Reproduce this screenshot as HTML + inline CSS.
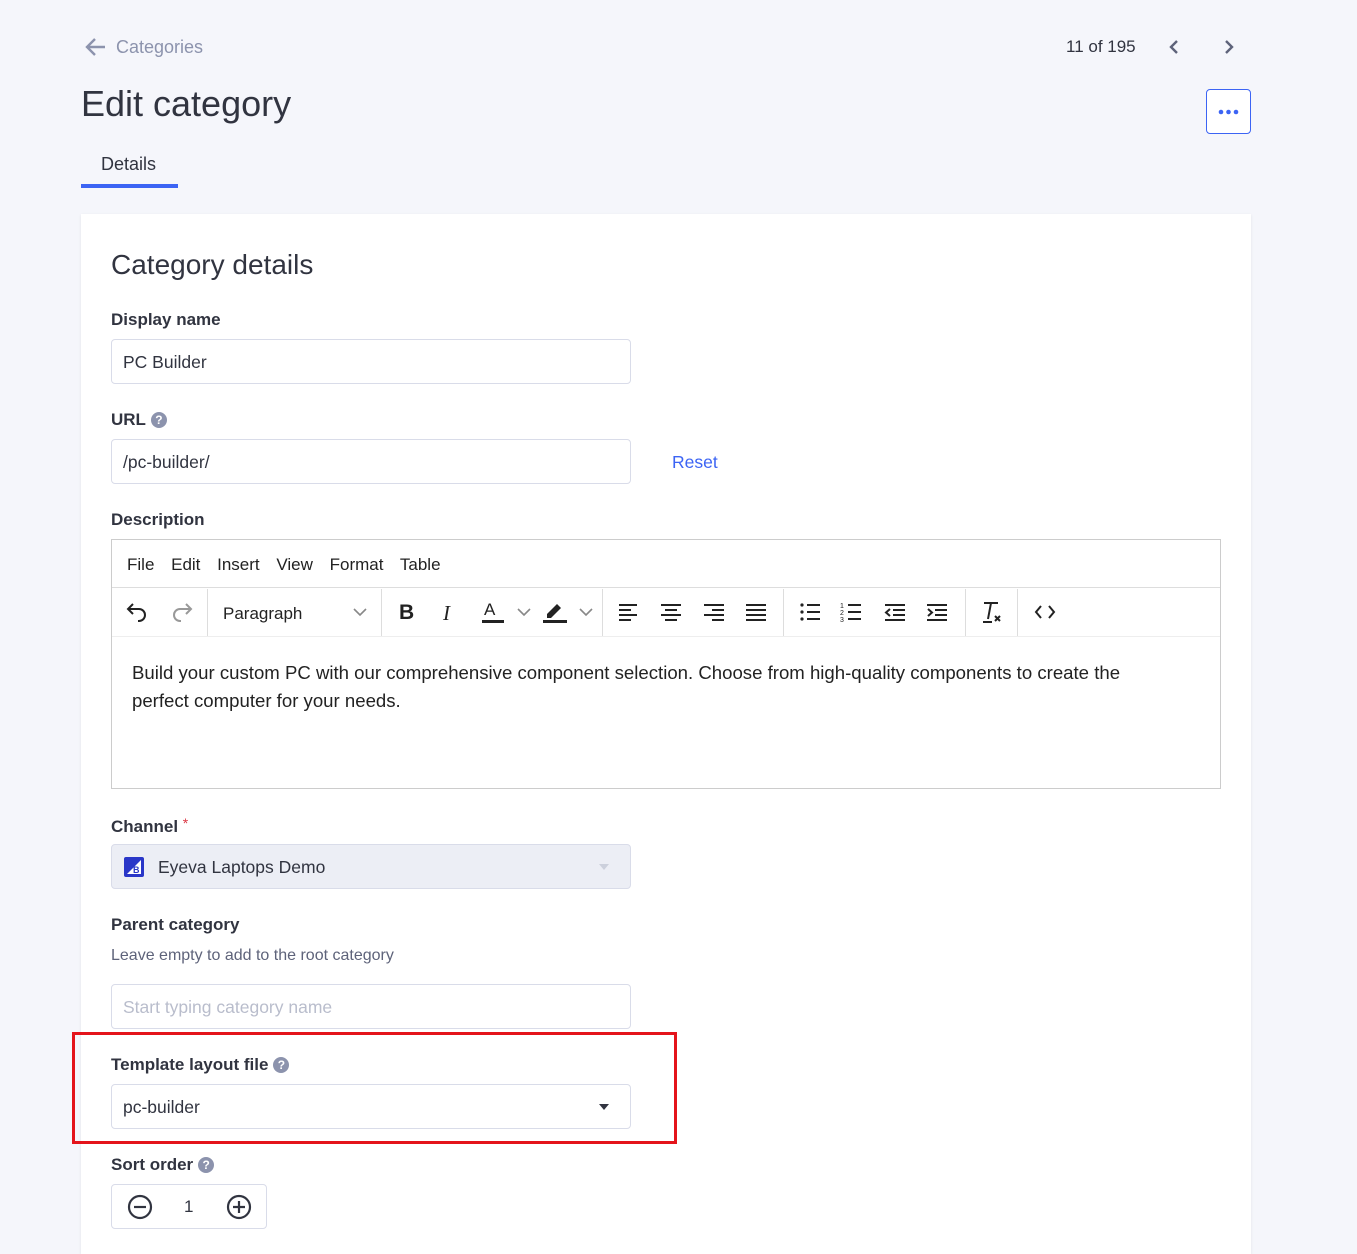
<!DOCTYPE html>
<html><head><meta charset="utf-8"><style>
*{box-sizing:border-box;margin:0;padding:0}
body{width:1357px;height:1235px;background:#f5f6fb;font-family:"Liberation Sans",sans-serif;color:#313440;position:relative;overflow:hidden}
.a{position:absolute;white-space:nowrap}
.card{position:absolute;left:81px;top:214px;width:1170px;height:1040px;background:#fff;box-shadow:0 1px 3px rgba(0,0,0,.08)}
.lbl{font-weight:bold;font-size:17px;color:#313440}
.inp{position:absolute;left:111px;width:520px;height:45px;border:1px solid #d9dce9;border-radius:4px;background:#fff;font-size:17.5px;padding:12px 11px 0;color:#313440}
.q{display:inline-block;width:16px;height:16px;border-radius:50%;background:#8c93ad;color:#fff;font-size:12px;text-align:center;line-height:16px;vertical-align:1px;margin-left:5px;font-weight:bold}
.ic{position:absolute;top:598px}
</style></head><body>
<svg class="a" style="left:85px;top:37px" width="22" height="20" viewBox="0 0 22 20"><path d="M20 10H3M10 2L2 10l8 8" fill="none" stroke="#8c93ad" stroke-width="2.4"/></svg>
<div class="a" style="left:116px;top:37px;font-size:18px;color:#8c93ad">Categories</div>
<div class="a" style="left:81px;top:83px;font-size:36px;color:#313440">Edit category</div>
<div class="a" style="left:101px;top:154px;font-size:18px;color:#313440">Details</div>
<div class="a" style="left:81px;top:184px;width:97px;height:4px;background:#3c64f4"></div>
<div class="a" style="left:1066px;top:37px;font-size:17px;color:#313440">11 of 195</div>
<svg class="a" style="left:1166px;top:38px" width="16" height="18"><path d="M11 3L5 9l6 6" fill="none" stroke="#5e637a" stroke-width="2.4"/></svg>
<svg class="a" style="left:1221px;top:38px" width="16" height="18"><path d="M5 3l6 6-6 6" fill="none" stroke="#5e637a" stroke-width="2.4"/></svg>
<div class="a" style="left:1206px;top:89px;width:45px;height:45px;border:1px solid #3c64f4;border-radius:4px;background:#fff"><svg width="43" height="43"><circle cx="14" cy="22" r="2.3" fill="#3c64f4"/><circle cx="21.5" cy="22" r="2.3" fill="#3c64f4"/><circle cx="29" cy="22" r="2.3" fill="#3c64f4"/></svg></div>

<div class="card"></div>
<div class="a" style="left:111px;top:249px;font-size:28px;color:#313440">Category details</div>
<div class="a lbl" style="left:111px;top:310px">Display name</div>
<div class="inp" style="top:339px">PC Builder</div>
<div class="a lbl" style="left:111px;top:410px">URL<span class="q">?</span></div>
<div class="inp" style="top:439px">/pc-builder/</div>
<div class="a" style="left:672px;top:452px;font-size:17.5px;color:#3c64f4">Reset</div>
<div class="a lbl" style="left:111px;top:510px">Description</div>
<div class="a" style="left:111px;top:539px;width:1110px;height:250px;border:1px solid #ccc;background:#fff"></div>
<div class="a" style="left:112px;top:587px;width:1108px;height:1px;background:#ddd"></div>
<div class="a" style="left:112px;top:636px;width:1108px;height:1px;background:#eee"></div>
<div class="a" style="left:127px;top:555px;font-size:17px;color:#222;word-spacing:12px">File Edit Insert View Format Table</div>
<div class="a" style="left:207px;top:589px;width:1px;height:47px;background:#ddd"></div>
<div class="a" style="left:381px;top:589px;width:1px;height:47px;background:#ddd"></div>
<div class="a" style="left:602px;top:589px;width:1px;height:47px;background:#ddd"></div>
<div class="a" style="left:783px;top:589px;width:1px;height:47px;background:#ddd"></div>
<div class="a" style="left:965px;top:589px;width:1px;height:47px;background:#ddd"></div>
<div class="a" style="left:1017px;top:589px;width:1px;height:47px;background:#ddd"></div>
<svg class="ic" style="left:125px" width="24" height="28"><path d="M8 6L3 11l5 5M3 11h11a6 6 0 0 1 0 12h-1" fill="none" stroke="#222" stroke-width="2"/></svg>
<svg class="ic" style="left:170px" width="24" height="28"><path d="M16 6l5 5-5 5M21 11H10a6 6 0 0 0 0 12h1" fill="none" stroke="#999" stroke-width="2"/></svg>
<div class="a" style="left:223px;top:604px;font-size:17px;color:#222">Paragraph</div>
<svg class="ic" style="left:352px" width="16" height="28"><path d="M2 11l6 6 6-6" fill="none" stroke="#888" stroke-width="1.6"/></svg>
<div class="a" style="left:399px;top:601px;font-size:21px;font-weight:bold;color:#222">B</div>
<div class="a" style="left:443px;top:601px;font-size:21px;font-style:italic;font-family:'Liberation Serif',serif;color:#222">I</div>
<div class="a" style="left:484px;top:600px;font-size:17px;color:#222">A</div>
<div class="a" style="left:482px;top:620px;width:22px;height:3px;background:#222"></div>
<svg class="ic" style="left:516px" width="16" height="28"><path d="M2 11l6 6 6-6" fill="none" stroke="#888" stroke-width="1.6"/></svg>
<svg class="ic" style="left:543px" width="24" height="28"><path d="M4 16l10-10 4 4-10 10H4z" fill="#222"/><rect x="0" y="22" width="24" height="3" fill="#222"/></svg>
<svg class="ic" style="left:578px" width="16" height="28"><path d="M2 11l6 6 6-6" fill="none" stroke="#888" stroke-width="1.6"/></svg>
<svg class="ic" style="left:618px" width="22" height="28"><path d="M1 7h18M1 12h12M1 17h18M1 22h12" stroke="#222" stroke-width="2"/></svg>
<svg class="ic" style="left:660px" width="22" height="28"><path d="M1 7h20M5 12h12M1 17h20M5 22h12" stroke="#222" stroke-width="2"/></svg>
<svg class="ic" style="left:703px" width="22" height="28"><path d="M1 7h20M9 12h12M1 17h20M9 22h12" stroke="#222" stroke-width="2"/></svg>
<svg class="ic" style="left:745px" width="22" height="28"><path d="M1 7h20M1 12h20M1 17h20M1 22h20" stroke="#222" stroke-width="2"/></svg>
<svg class="ic" style="left:799px" width="24" height="28"><circle cx="3" cy="7" r="1.6" fill="#222"/><circle cx="3" cy="14" r="1.6" fill="#222"/><circle cx="3" cy="21" r="1.6" fill="#222"/><path d="M8 7h13M8 14h13M8 21h13" stroke="#222" stroke-width="2"/></svg>
<svg class="ic" style="left:840px" width="24" height="28"><text x="0" y="10" font-size="7" fill="#222">1</text><text x="0" y="17" font-size="7" fill="#222">2</text><text x="0" y="24" font-size="7" fill="#222">3</text><path d="M8 7h13M8 14h13M8 21h13" stroke="#222" stroke-width="2"/></svg>
<svg class="ic" style="left:884px" width="24" height="28"><path d="M1 7h20M9 12h12M9 17h12M1 22h20M6 11l-4 3.5 4 3.5" fill="none" stroke="#222" stroke-width="2"/></svg>
<svg class="ic" style="left:926px" width="24" height="28"><path d="M1 7h20M9 12h12M9 17h12M1 22h20M2 11l4 3.5-4 3.5" fill="none" stroke="#222" stroke-width="2"/></svg>
<svg class="ic" style="left:980px" width="24" height="28"><path d="M4 5h14M11 5l-3 16M3 24h9M15 18l5 5M20 18l-5 5" fill="none" stroke="#222" stroke-width="2"/></svg>
<svg class="ic" style="left:1033px" width="24" height="28"><path d="M8 8l-5 6 5 6M16 8l5 6-5 6" fill="none" stroke="#222" stroke-width="2"/></svg>
<div class="a" style="left:132px;top:659px;font-size:18.6px;line-height:28px;color:#222;white-space:normal;width:1040px">Build your custom PC with our comprehensive component selection. Choose from high-quality components to create the perfect computer for your needs.</div>

<div class="a lbl" style="left:111px;top:815px">Channel <span style="color:#db3643;font-weight:normal;font-size:14px;vertical-align:4px">*</span></div>
<div class="inp" style="top:844px;background:#eceef5;padding-left:46px;color:#313440">Eyeva Laptops Demo</div>
<svg class="a" style="left:124px;top:857px" width="20" height="20"><rect width="20" height="20" rx="2" fill="#2a37c8"/><path d="M3 17L17 3v14z" fill="#fff"/><text x="9" y="16" font-size="9" font-weight="bold" fill="#2a37c8">B</text></svg>
<svg class="a" style="left:598px;top:863px" width="12" height="8"><path d="M1 1h10L6 7z" fill="#ccd0dc"/></svg>
<div class="a lbl" style="left:111px;top:915px">Parent category</div>
<div class="a" style="left:111px;top:947px;font-size:16px;color:#5e637a">Leave empty to add to the root category</div>
<div class="inp" style="top:984px;color:#b9bdcc">Start typing category name</div>
<div class="a" style="left:72px;top:1032px;width:605px;height:112px;border:3px solid #e4141b"></div>
<div class="a lbl" style="left:111px;top:1055px">Template layout file<span class="q">?</span></div>
<div class="inp" style="top:1084px">pc-builder</div>
<svg class="a" style="left:598px;top:1103px" width="12" height="8"><path d="M1 1h10L6 7z" fill="#313440"/></svg>
<div class="a lbl" style="left:111px;top:1155px">Sort order<span class="q">?</span></div>
<div class="a" style="left:111px;top:1184px;width:156px;height:45px;border:1px solid #d9dce9;border-radius:4px;background:#fff"></div>
<svg class="a" style="left:127px;top:1194px" width="26" height="26"><circle cx="13" cy="13" r="11" fill="none" stroke="#313440" stroke-width="2.2"/><path d="M7 13h12" stroke="#313440" stroke-width="2.2"/></svg>
<div class="a" style="left:184px;top:1197px;font-size:17px">1</div>
<svg class="a" style="left:226px;top:1194px" width="26" height="26"><circle cx="13" cy="13" r="11" fill="none" stroke="#313440" stroke-width="2.2"/><path d="M7 13h12M13 7v12" stroke="#313440" stroke-width="2.2"/></svg>
</body></html>
